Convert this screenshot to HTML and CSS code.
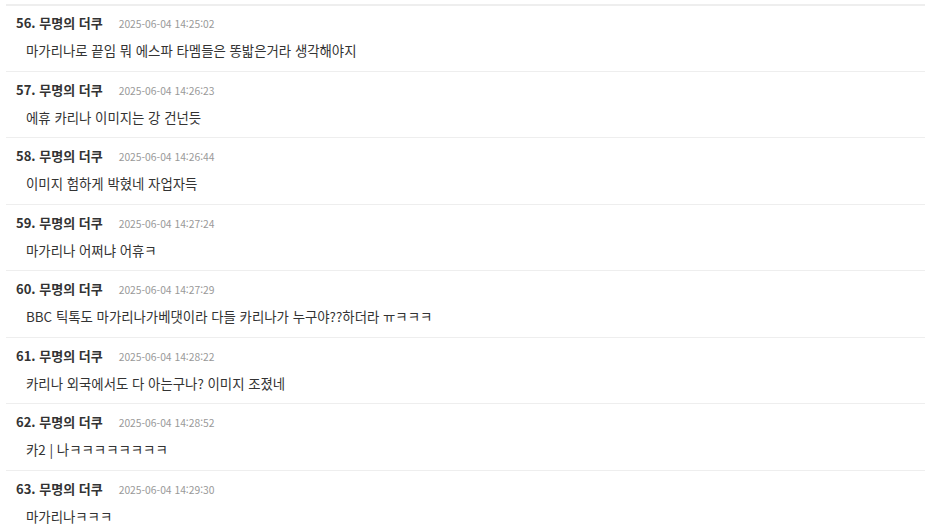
FILE: index.html
```html
<!DOCTYPE html>
<html lang="ko">
<head>
  <meta charset="UTF-8" />
  <meta name="viewport" content="width=device-width, initial-scale=1.0"/>
  <title>댓글</title>
  <link rel="stylesheet" href="styles.css">
</head>
<body>

  <div class="comments">

    <div class="comment">
      <div class="meta"><span class="nick">56. 무명의 더쿠</span><span class="date">2025-06-04 14:25:02</span></div>
      <p class="text">마가리나로 끝임 뭐 에스파 타멤들은 똥밟은거라 생각해야지</p>
    </div>

    <div class="comment">
      <div class="meta"><span class="nick">57. 무명의 더쿠</span><span class="date">2025-06-04 14:26:23</span></div>
      <p class="text">에휴 카리나 이미지는 강 건넌듯</p>
    </div>

    <div class="comment">
      <div class="meta"><span class="nick">58. 무명의 더쿠</span><span class="date">2025-06-04 14:26:44</span></div>
      <p class="text">이미지 험하게 박혔네 자업자득</p>
    </div>

    <div class="comment">
      <div class="meta"><span class="nick">59. 무명의 더쿠</span><span class="date">2025-06-04 14:27:24</span></div>
      <p class="text">마가리나 어쩌냐 어휴ㅋ</p>
    </div>

    <div class="comment">
      <div class="meta"><span class="nick">60. 무명의 더쿠</span><span class="date">2025-06-04 14:27:29</span></div>
      <p class="text">BBC 틱톡도 마가리나가베댓이라 다들 카리나가 누구야??하더라 ㅠㅋㅋㅋ</p>
    </div>

    <div class="comment">
      <div class="meta"><span class="nick">61. 무명의 더쿠</span><span class="date">2025-06-04 14:28:22</span></div>
      <p class="text">카리나 외국에서도 다 아는구나? 이미지 조졌네</p>
    </div>

    <div class="comment">
      <div class="meta"><span class="nick">62. 무명의 더쿠</span><span class="date">2025-06-04 14:28:52</span></div>
      <p class="text">카2 | 나ㅋㅋㅋㅋㅋㅋㅋㅋ</p>
    </div>

    <div class="comment">
      <div class="meta"><span class="nick">63. 무명의 더쿠</span><span class="date">2025-06-04 14:29:30</span></div>
      <p class="text">마가리나ㅋㅋㅋ</p>
    </div>

  </div>

</body>
</html>
```

FILE: styles.css
```css
* {
  margin: 0;
  padding: 0;
  box-sizing: border-box;
}

body {
  background-color: #fff;
  font-family: 'Noto Sans CJK KR', 'Noto Sans', sans-serif;
  color: #333;
}

.comments {
  margin-top: 4px;
  margin-left: 6px;
  border-top: 2px solid #eeeeee;
}

.comment {
  padding: 8px 0 10.5px 10px;
  border-top: 1px solid #eeeeee;
}

.comment:first-child {
  border-top: none;
  padding-top: 7px;
}

.meta {
  display: flex;
  align-items: baseline;
  height: 20px;
  line-height: 20px;
}

.nick {
  font-size: 13px;
  font-weight: bold;
  color: #333;
  margin-right: 16px;
}

.date {
  font-size: 10.3px;
  color: #999;
}

.text {
  margin-top: 7px;
  padding-left: 10px;
  font-size: 13.4px;
  line-height: 20px;
  color: #333;
}
```
